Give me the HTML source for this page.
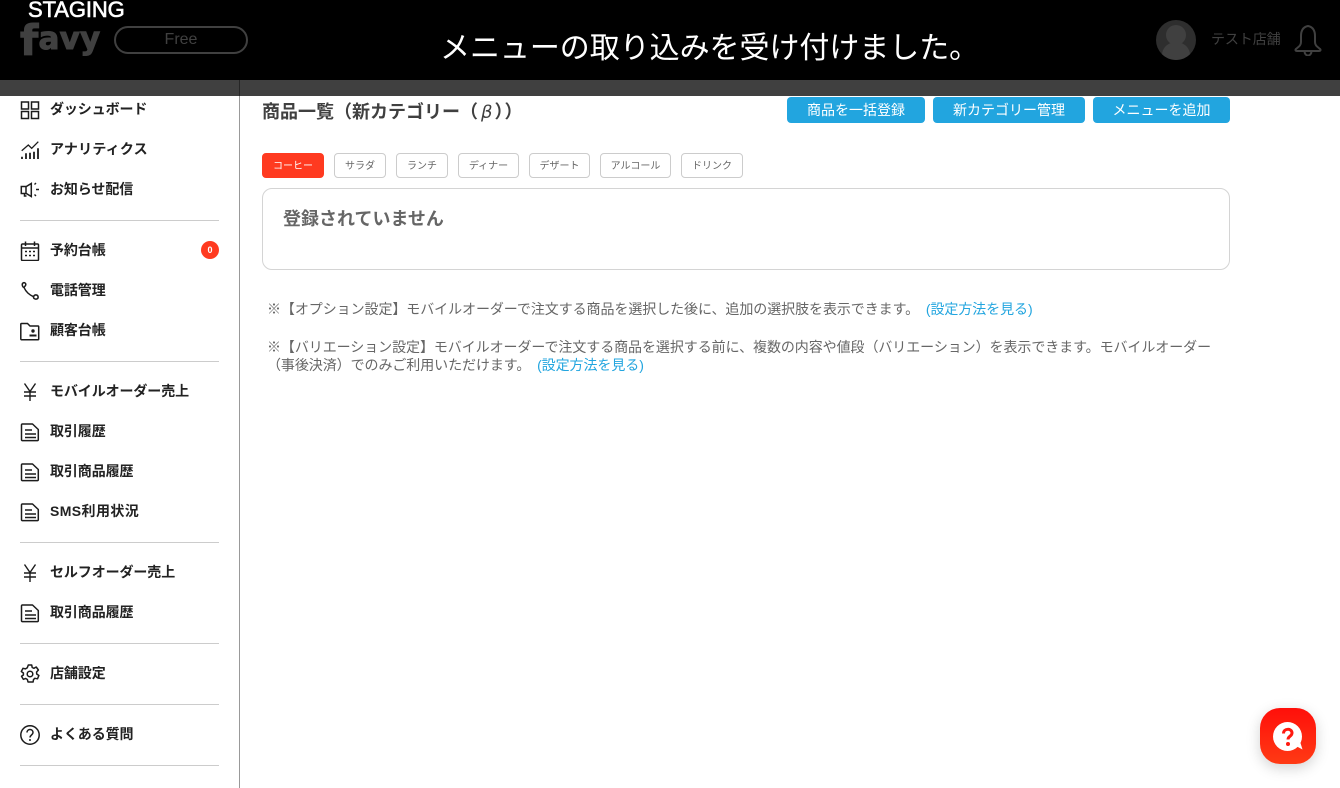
<!DOCTYPE html>
<html lang="ja"><head><meta charset="utf-8"><title>商品一覧</title>
<style>
*{box-sizing:border-box}
html,body{margin:0;padding:0;width:1340px;height:788px;overflow:hidden;background:#fff}
body{font-family:"Liberation Sans","Noto Sans CJK JP",sans-serif;position:relative;color:#333}
.a{position:absolute;white-space:nowrap}
.nav{position:absolute;left:50px;font-size:14px;line-height:20px;font-weight:700;color:#222;white-space:nowrap;letter-spacing:-.1px}
.hr{position:absolute;left:20px;width:199px;height:1px;background:#ccc}
svg.i{position:absolute;left:20px;width:20px;height:20px;fill:none;stroke:#1c1c1c;stroke-width:1.5}
.btn{position:absolute;top:97px;height:26px;background:#22a5df;border-radius:4px;color:#fff;font-size:14px;line-height:26px;text-align:center;white-space:nowrap}
.tab{position:absolute;top:153px;height:25px;border:1px solid #ccc;border-radius:4px;font-size:10px;line-height:26px;text-align:center;color:#666;background:#fff;white-space:nowrap}
.note{position:absolute;left:267px;font-size:14px;line-height:19px;color:#666;white-space:nowrap;letter-spacing:-.07px}
.note a{color:#22a5df;text-decoration:none}
</style></head><body>

<div class="a" style="left:0;top:0;width:1340px;height:80px;background:#000"></div>
<div class="a" style="left:0;top:80px;width:1340px;height:16px;background:#404040"></div>
<div class="a" style="left:239px;top:80px;width:1px;height:708px;background:#999"></div>
<div class="a" style="left:239px;top:80px;width:1px;height:16px;background:#262626"></div>

<div class="a" style="left:28px;top:-3px;font-size:22px;line-height:26px;color:#fff;letter-spacing:-.1px;-webkit-text-stroke:.6px #fff">STAGING</div>
<div class="a" style="left:20px;top:17px;font-size:31px;line-height:44px;font-weight:700;color:#404040;font-family:'DejaVu Sans',sans-serif;letter-spacing:.2px;-webkit-text-stroke:1px #404040"><span style="font-size:42px;line-height:0;position:relative;top:6px">f</span>avy</div>
<div class="a" style="left:114px;top:26px;width:134px;height:28px;border:2px solid #404040;border-radius:14px;color:#404040;font-size:16px;line-height:24px;text-align:center">Free</div>
<div class="a" style="left:440px;top:27px;font-size:30px;line-height:44px;color:#fff;letter-spacing:-.05px">メニューの取り込みを受け付けました。</div>

<svg class="a" style="left:1156px;top:20px" width="40" height="40" viewBox="0 0 40 40"><defs><clipPath id="c"><circle cx="20" cy="20" r="20"/></clipPath></defs><circle cx="20" cy="20" r="20" fill="#2e2e2e"/><g clip-path="url(#c)" fill="#404040"><circle cx="20" cy="15" r="10"/><ellipse cx="20" cy="35" rx="14" ry="13"/></g></svg>
<div class="a" style="left:1211px;top:29px;font-size:14px;line-height:20px;color:#404040;letter-spacing:-.1px">テスト店舗</div>
<svg class="a" style="left:1294px;top:24px" width="28" height="32" viewBox="0 0 28 32" fill="none" stroke="#404040" stroke-width="2" stroke-linejoin="round"><path d="M14 2c-5 1-7 5-7 10v6c0 4-3 5-5 7-1 1-.5 2 1 2h22c1.500 0 2-1 1-2-2-2-5-3-5-7v-6c0-5-2-9-7-10z"/><path d="M10.500 27c0 6 7 6 7 0"/></svg>

<svg class="i" style="top:100px" viewBox="0 0 20 20"><path d="M1.500 2h7v7h-7zM11.500 2h7v7h-7zM1.500 11.500h7v7h-7zM11.500 11.500h7v7h-7z"/></svg>
<div class="nav" style="top:99px">ダッシュボード</div>
<svg class="i" style="top:140px" viewBox="0 0 20 20"><path d="M1.700 10.700L8.300 5l3.400 3.300 6.600-6.600" stroke-width="1.300"/><path d="M2 19v-2.300M6 19v-5.700M10 19v-6.300M14 19v-7.300M18 19V8.300" stroke-width="1.800"/></svg>
<div class="nav" style="top:139px;letter-spacing:.2px">アナリティクス</div>
<svg class="i" style="top:180px" viewBox="0 0 20 20"><path d="M1.300 6.500h5l5-3v13l-5-3h-5zM6 7v6.500M4.500 13.500V16h2" stroke-width="1.500"/><path d="M14.500 4.500L16 3M16 9.500h3M14.500 14.500L16 16" stroke-width="1.400"/></svg>
<div class="nav" style="top:179px">お知らせ配信</div>
<div class="hr" style="top:220px"></div>

<svg class="i" style="top:241px" viewBox="0 0 20 20"><path d="M2.500 3h15a1 1 0 0 1 1 1v14.500a1 1 0 0 1-1 1h-15a1 1 0 0 1-1-1V4a1 1 0 0 1 1-1zM1.500 7h17M5.500 .5v4.500M14.500 .5v4.500"/><path d="M5 10.500h2M9 10.500h2M13 10.500h2M5 14.500h2M9 14.500h2M13 14.500h2" stroke-width="1.500"/></svg>
<div class="nav" style="top:240px">予約台帳</div>
<div class="a" style="left:201px;top:241px;width:18px;height:18px;border-radius:50%;background:#ff3a20;color:#fff;font-size:9px;line-height:18px;text-align:center;font-weight:700">0</div>
<svg class="i" style="top:281px" viewBox="0 0 20 20"><path d="M4 6.500C2.500 6 1.500 3.200 3 2c1.500-1 3.200.5 2.700 2-.3 1-1.200 1.500-1.700 2.500 1.800 4 5 7.200 9.500 9.200.5-1.200 1.700-2 3-1.700 1.800.4 2.200 3 .7 3.800-1.700.8-4-.2-3.700-2.100"/></svg>
<div class="nav" style="top:280px">電話管理</div>
<svg class="i" style="top:321px" viewBox="0 0 20 20"><path d="M1.500 2.500H7.500l2.500 2.500h8a.7.7 0 0 1 .7.7V18a.7.7 0 0 1-.7.7H1.500a.7.7 0 0 1-.7-.7V3.200a.7.7 0 0 1 .7-.7z"/><circle cx="13" cy="10" r="1.700" fill="#1c1c1c" stroke="none"/><path d="M9.500 14.500h7" stroke-width="2"/></svg>
<div class="nav" style="top:320px">顧客台帳</div>
<div class="hr" style="top:361px"></div>

<svg class="i" style="top:382px" viewBox="0 0 20 20"><path d="M4.500 1.500L10 9.500l5.500-8M4 10h12M4 14h12M10 9.500V19" stroke-width="1.400"/></svg>
<div class="nav" style="top:381px">モバイルオーダー売上</div>
<svg class="i" style="top:422px" viewBox="0 0 20 20"><path d="M2.300 2h10.200l5.800 5.500v10.300a.8.8 0 0 1-.8.8H2.300a.8.8 0 0 1-.8-.8V2.800a.8.8 0 0 1 .8-.8zM5 8h7M5 12h11M5 15.500h11" stroke-linejoin="round"/></svg>
<div class="nav" style="top:421px">取引履歴</div>
<svg class="i" style="top:462px" viewBox="0 0 20 20"><path d="M2.300 2h10.200l5.800 5.500v10.300a.8.8 0 0 1-.8.8H2.300a.8.8 0 0 1-.8-.8V2.800a.8.8 0 0 1 .8-.8zM5 8h7M5 12h11M5 15.500h11" stroke-linejoin="round"/></svg>
<div class="nav" style="top:461px">取引商品履歴</div>
<svg class="i" style="top:502px" viewBox="0 0 20 20"><path d="M2.300 2h10.200l5.800 5.500v10.300a.8.8 0 0 1-.8.8H2.300a.8.8 0 0 1-.8-.8V2.800a.8.8 0 0 1 .8-.8zM5 8h7M5 12h11M5 15.500h11" stroke-linejoin="round"/></svg>
<div class="nav" style="top:501px;letter-spacing:.4px">SMS利用状況</div>
<div class="hr" style="top:542px"></div>

<svg class="i" style="top:563px" viewBox="0 0 20 20"><path d="M4.500 1.500L10 9.500l5.500-8M4 10h12M4 14h12M10 9.500V19" stroke-width="1.400"/></svg>
<div class="nav" style="top:562px">セルフオーダー売上</div>
<svg class="i" style="top:603px" viewBox="0 0 20 20"><path d="M2.300 2h10.200l5.800 5.500v10.300a.8.8 0 0 1-.8.8H2.300a.8.8 0 0 1-.8-.8V2.800a.8.8 0 0 1 .8-.8zM5 8h7M5 12h11M5 15.500h11" stroke-linejoin="round"/></svg>
<div class="nav" style="top:602px">取引商品履歴</div>
<div class="hr" style="top:643px"></div>

<svg class="i" style="top:664px" viewBox="0 0 20 20"><circle cx="10" cy="10" r="2.800"/><path d="M8.300 1h3.400l.5 2.500 1.700.8L16.200 3l2.200 3-1.800 2 .1 2 2.200 1.500-1.400 3.300-2.600-.5-1.400 1.300-.4 2.400H8l-.6-2.500-1.700-1-2.400.8-1.800-3L3.400 11V9L1.300 7.500 3 4.300l2.500.6 1.800-1.200z" stroke-linejoin="round"/></svg>
<div class="nav" style="top:663px">店舗設定</div>
<div class="hr" style="top:704px"></div>

<svg class="i" style="top:725px" viewBox="0 0 20 20"><circle cx="10" cy="10" r="9.200"/><path d="M7 7.500c0-4 6-4 6 0 0 2.500-3 2.500-3 5"/><circle cx="10" cy="15" r="1" fill="#1c1c1c" stroke="none"/></svg>
<div class="nav" style="top:724px">よくある質問</div>
<div class="hr" style="top:765px"></div>

<div class="a" style="left:262px;top:99px;font-size:18px;line-height:26px;font-weight:700;color:#404040">商品一覧（新カテゴリー（<i style="font-weight:400;font-family:'DejaVu Sans',sans-serif;font-size:18px;margin:0 2px 0 3px">β</i><span style="letter-spacing:1px">））</span></div>
<div class="btn" style="left:787px;width:138px">商品を一括登録</div>
<div class="btn" style="left:933px;width:152px">新カテゴリー管理</div>
<div class="btn" style="left:1093px;width:137px">メニューを追加</div>

<div class="tab" style="left:262px;width:62px;background:#ff3a20;border-color:#ff3a20;color:#fff">コーヒー</div>
<div class="tab" style="left:334px;width:52px">サラダ</div>
<div class="tab" style="left:396px;width:52px">ランチ</div>
<div class="tab" style="left:458px;width:61px">ディナー</div>
<div class="tab" style="left:529px;width:61px">デザート</div>
<div class="tab" style="left:600px;width:71px">アルコール</div>
<div class="tab" style="left:681px;width:62px">ドリンク</div>

<div class="a" style="left:262px;top:188px;width:968px;height:82px;border:1px solid #d4d4d4;border-radius:10px"></div>
<div class="a" style="left:283px;top:206px;font-size:18px;line-height:26px;font-weight:700;color:#666">登録されていません</div>

<div class="note" style="top:300px">※【オプション設定】モバイルオーダーで注文する商品を選択した後に、追加の選択肢を表示できます。 <a style="margin-left:3px">(設定方法を見る)</a></div>
<div class="note" style="top:338px;width:950px;line-height:18px">※【バリエーション設定】モバイルオーダーで注文する商品を選択する前に、複数の内容や値段（バリエーション）を表示できます。モバイルオーダー<br>（事後決済）でのみご利用いただけます。 <a style="margin-left:3px">(設定方法を見る)</a></div>

<div class="a" style="left:1260px;top:708px;width:56px;height:56px;border-radius:20px;background:linear-gradient(#ff0f0a,#ff3a14);box-shadow:0 4px 14px rgba(0,0,0,.18)"></div>
<svg class="a" style="left:1272px;top:720px" width="34" height="34" viewBox="0 0 34 34"><circle cx="15.500" cy="16.500" r="14.500" fill="#fff"/><path d="M24 26l6.500 3.500-2.500-8z" fill="#fff"/><path d="M11.500 13.500c0-5.500 8.500-5.500 8.500-.5 0 3.500-4 3-4 6.500" fill="none" stroke="#ff1a10" stroke-width="3"/><circle cx="16" cy="24" r="2" fill="#ff1a10"/></svg>
</body></html>
